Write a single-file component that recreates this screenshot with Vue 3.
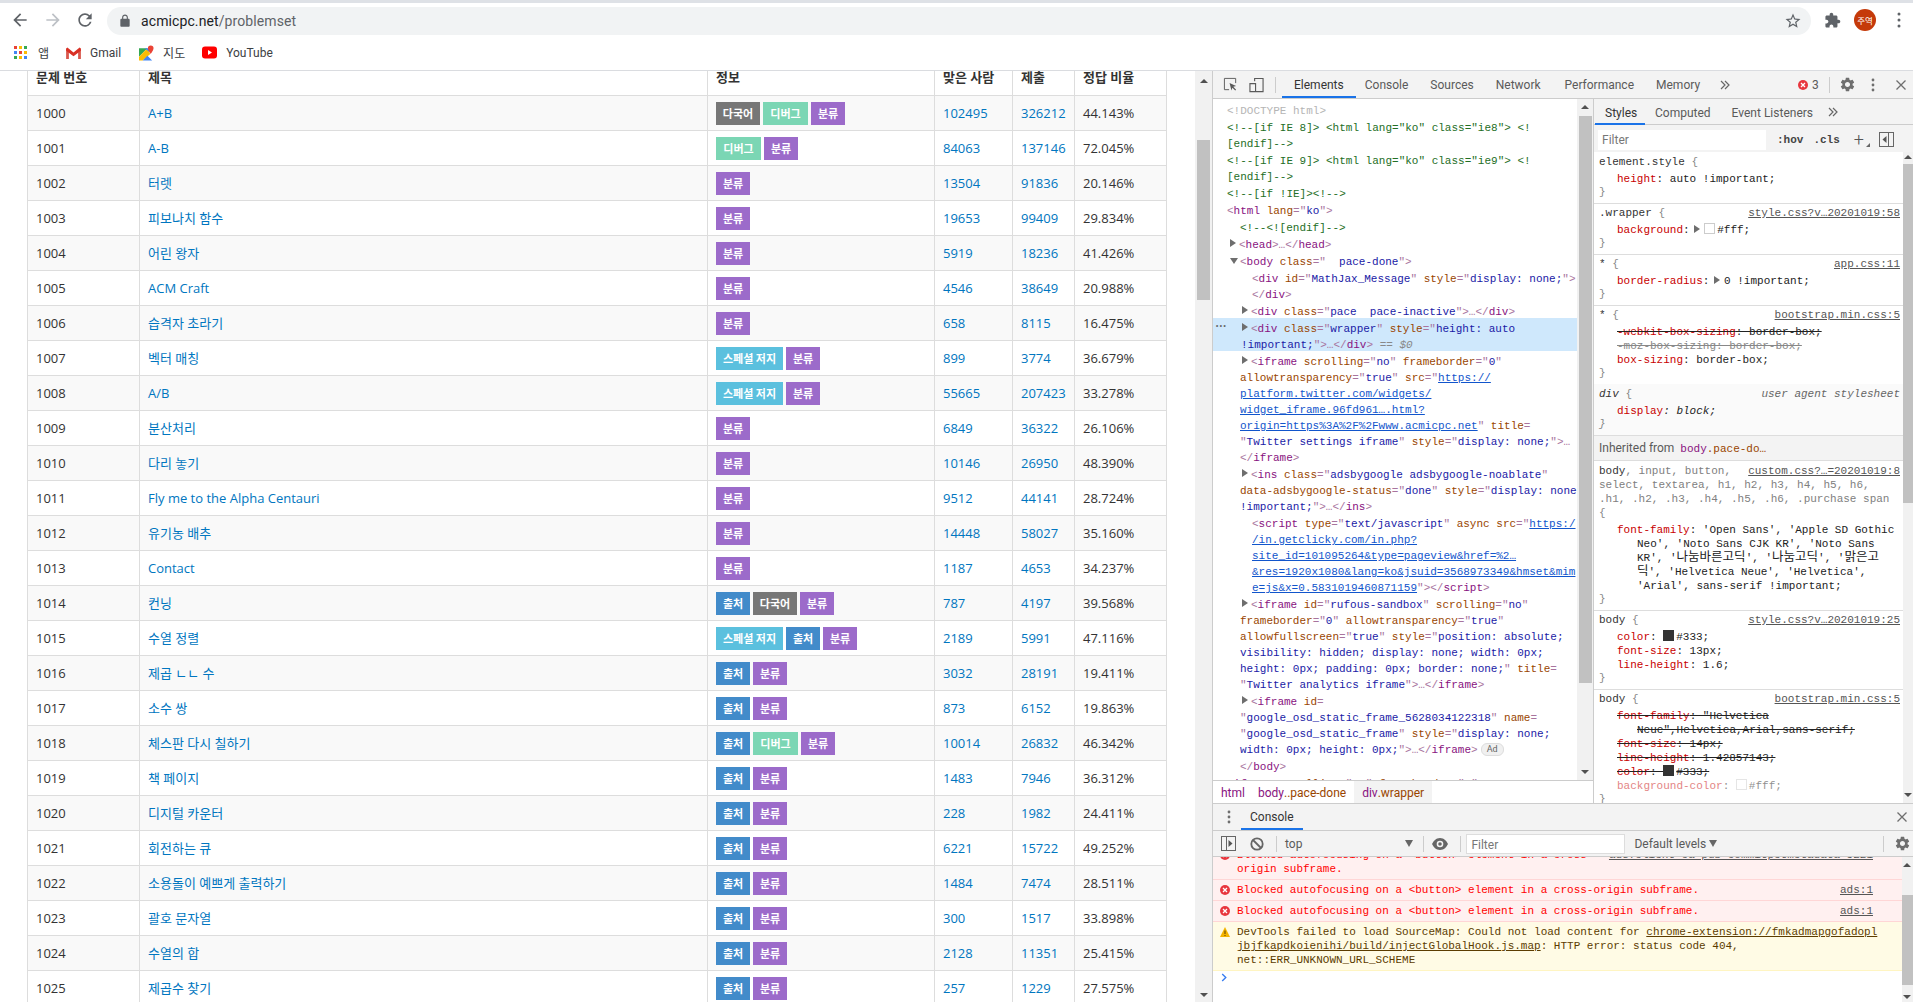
<script setup>
const raw = [
  'A+B|다국어,디버그,분류|102495|326212|44.143%', 'A-B|디버그,분류|84063|137146|72.045%', '터렛|분류|13504|91836|20.146%',
  '피보나치 함수|분류|19653|99409|29.834%', '어린 왕자|분류|5919|18236|41.426%', 'ACM Craft|분류|4546|38649|20.988%',
  '습격자 초라기|분류|658|8115|16.475%', '벡터 매칭|스페셜 저지,분류|899|3774|36.679%', 'A/B|스페셜 저지,분류|55665|207423|33.278%',
  '분산처리|분류|6849|36322|26.106%', '다리 놓기|분류|10146|26950|48.390%', 'Fly me to the Alpha Centauri|분류|9512|44141|28.724%',
  '유기농 배추|분류|14448|58027|35.160%', 'Contact|분류|1187|4653|34.237%', '컨닝|출처,다국어,분류|787|4197|39.568%',
  '수열 정렬|스페셜 저지,출처,분류|2189|5991|47.116%', '제곱 ㄴㄴ 수|출처,분류|3032|28191|19.411%', '소수 쌍|출처,분류|873|6152|19.863%',
  '체스판 다시 칠하기|출처,디버그,분류|10014|26832|46.342%', '책 페이지|출처,분류|1483|7946|36.312%', '디지털 카운터|출처,분류|228|1982|24.411%',
  '회전하는 큐|출처,분류|6221|15722|49.252%', '소용돌이 예쁘게 출력하기|출처,분류|1484|7474|28.511%', '괄호 문자열|출처,분류|300|1517|33.898%',
  '수열의 합|출처,분류|2128|11351|25.415%', '제곱수 찾기|출처,분류|257|1229|27.575%',
]
const kinds = { '다국어': 'k-multi', '디버그': 'k-debug', '분류': 'k-cat', '스페셜 저지': 'k-special', '출처': 'k-source' }
const rows = raw.map((r, i) => {
  const [title, labels, ac, sub, ratio] = r.split('|')
  return { id: 1000 + i, title, labels: labels.split(','), ac, sub, ratio }
})

const parse = (s) => [...s.matchAll(/\{(\w)\}([^{]*)/g)].map((m) => ({ c: 'h-' + m[1], t: m[2] }))
const src = [
  [14, 1, '', '{d}<!DOCTYPE html>'],
  [14, 1, '', '{c}<!--[if IE 8]> <html lang="ko" class="ie8"> <!'],
  [14, 0, '', '{c}[endif]-->'],
  [14, 1, '', '{c}<!--[if IE 9]> <html lang="ko" class="ie9"> <!'],
  [14, 0, '', '{c}[endif]-->'],
  [14, 1, '', '{c}<!--[if !IE]><!-->'],
  [14, 1, '', '{p}<{t}html {n}lang{p}="{v}ko{p}">'],
  [27, 1, '', '{c}<!--<![endif]-->'],
  [26, 1, 'r', '{p}<{t}head{p}>…</{t}head{p}>'],
  [26, 1, 'd', '{p}<{t}body {n}class{p}="  {v}pace-done{p}">'],
  [39, 1, '', '{p}<{t}div {n}id{p}="{v}MathJax_Message{p}" {n}style{p}="{v}display: none;{p}">'],
  [39, 0, '', '{p}</{t}div{p}>'],
  [38, 1, 'r', '{p}<{t}div {n}class{p}="{v}pace  pace-inactive{p}">…</{t}div{p}>'],
  [38, 1, 'r', '{p}<{t}div {n}class{p}="{v}wrapper{p}" {n}style{p}="{v}height: auto', 's'],
  [28, 0, '', '{v}!important;{p}">…</{t}div{p}>{e} == $0', 's'],
  [38, 1, 'r', '{p}<{t}iframe {n}scrolling{p}="{v}no{p}" {n}frameborder{p}="{v}0{p}"'],
  [27, 0, '', '{n}allowtransparency{p}="{v}true{p}" {n}src{p}="{l}https://'],
  [27, 0, '', '{l}platform.twitter.com/widgets/'],
  [27, 0, '', '{l}widget_iframe.96fd961….html?'],
  [27, 0, '', '{l}origin=https%3A%2F%2Fwww.acmicpc.net{p}" {n}title{p}='],
  [27, 0, '', '{p}"{v}Twitter settings iframe{p}" {n}style{p}="{v}display: none;{p}">…'],
  [27, 0, '', '{p}</{t}iframe{p}>'],
  [38, 1, 'r', '{p}<{t}ins {n}class{p}="{v}adsbygoogle adsbygoogle-noablate{p}"'],
  [27, 0, '', '{n}data-adsbygoogle-status{p}="{v}done{p}" {n}style{p}="{v}display: none'],
  [27, 0, '', '{v}!important;{p}">…</{t}ins{p}>'],
  [39, 1, '', '{p}<{t}script {n}type{p}="{v}text/javascript{p}" {n}async {n}src{p}="{l}https:/'],
  [39, 0, '', '{l}/in.getclicky.com/in.php?'],
  [39, 0, '', '{l}site_id=101095264&type=pageview&href=%2…'],
  [39, 0, '', '{l}&res=1920x1080&lang=ko&jsuid=3568973349&hmset&mim'],
  [39, 0, '', '{l}e=js&x=0.5831019460871159{p}"></{t}script{p}>'],
  [38, 1, 'r', '{p}<{t}iframe {n}id{p}="{v}rufous-sandbox{p}" {n}scrolling{p}="{v}no{p}"'],
  [27, 0, '', '{n}frameborder{p}="{v}0{p}" {n}allowtransparency{p}="{v}true{p}"'],
  [27, 0, '', '{n}allowfullscreen{p}="{v}true{p}" {n}style{p}="{v}position: absolute;'],
  [27, 0, '', '{v}visibility: hidden; display: none; width: 0px;'],
  [27, 0, '', '{v}height: 0px; padding: 0px; border: none;{p}" {n}title{p}='],
  [27, 0, '', '{p}"{v}Twitter analytics iframe{p}">…</{t}iframe{p}>'],
  [38, 1, 'r', '{p}<{t}iframe {n}id{p}='],
  [27, 0, '', '{p}"{v}google_osd_static_frame_5628034122318{p}" {n}name{p}='],
  [27, 0, '', '{p}"{v}google_osd_static_frame{p}" {n}style{p}="{v}display: none;'],
  [27, 0, '', '{v}width: 0px; height: 0px;{p}">…</{t}iframe{p}>', '', 'ad'],
  [27, 1, '', '{p}</{t}body{p}>'],
  [14, 1, '', '{p}<{t}iframe {n}scrolling{p}="{v}no{p}" {n}frameborder{p}="{v}0{p}"'],
]
const lines = src.map(([ind, el, tri, h, sel, ad]) => ({ ind, el, tri, segs: parse(h), sel, ad }))
const paths = {
  back: 'M20 11H7.83l5.59-5.59L12 4l-8 8 8 8 1.41-1.41L7.83 13H20v-2z',
  fwd: 'M4 11h12.17l-5.59-5.59L12 4l8 8-8 8-1.41-1.41L16.17 13H4v-2z',
  reload: 'M17.65 6.35A7.958 7.958 0 0 0 12 4c-4.42 0-7.99 3.58-7.99 8s3.57 8 7.99 8c3.73 0 6.84-2.55 7.73-6h-2.08A5.99 5.99 0 0 1 12 18c-3.31 0-6-2.69-6-6s2.69-6 6-6c1.66 0 3.14.69 4.22 1.78L13 11h7V4l-2.35 2.35z',
  lock: 'M18 8h-1V6c0-2.76-2.24-5-5-5S7 3.24 7 6v2H6c-1.1 0-2 .9-2 2v10c0 1.1.9 2 2 2h12c1.1 0 2-.9 2-2V10c0-1.1-.9-2-2-2zM9 6c0-1.66 1.34-3 3-3s3 1.34 3 3v2H9V6z',
  star: 'M22 9.24l-7.19-.62L12 2 9.19 8.63 2 9.24l5.46 4.73L5.82 21 12 17.27 18.18 21l-1.63-7.03L22 9.24zM12 15.4l-3.76 2.27 1-4.28-3.32-2.88 4.38-.38L12 6.1l1.71 4.04 4.38.38-3.32 2.88 1 4.28L12 15.4z',
  puzzle: 'M20.5 11H19V7c0-1.1-.9-2-2-2h-4V3.5C13 2.12 11.88 1 10.5 1S8 2.12 8 3.5V5H4c-1.1 0-1.99.9-1.99 2v3.8H3.5c1.49 0 2.7 1.21 2.7 2.7s-1.21 2.7-2.7 2.7H2V20c0 1.1.9 2 2 2h3.8v-1.5c0-1.49 1.21-2.7 2.7-2.7 1.49 0 2.7 1.21 2.7 2.7V22H17c1.1 0 2-.9 2-2v-4h1.5c1.38 0 2.5-1.12 2.5-2.5S21.88 11 20.5 11z',
  gear: 'M19.14 12.94c.04-.3.06-.61.06-.94 0-.32-.02-.64-.07-.94l2.03-1.58a.49.49 0 0 0 .12-.61l-1.92-3.32a.488.488 0 0 0-.59-.22l-2.39.96c-.5-.38-1.03-.7-1.62-.94l-.36-2.54a.484.484 0 0 0-.48-.41h-3.84c-.24 0-.43.17-.47.41l-.36 2.54c-.59.24-1.13.57-1.62.94l-2.39-.96c-.22-.08-.47 0-.59.22L2.74 8.87c-.12.21-.08.47.12.61l2.03 1.58c-.05.3-.09.63-.09.94s.02.64.07.94l-2.03 1.58a.49.49 0 0 0-.12.61l1.92 3.32c.12.22.37.29.59.22l2.39-.96c.5.38 1.03.7 1.62.94l.36 2.54c.05.24.24.41.48.41h3.84c.24 0 .44-.17.47-.41l.36-2.54c.59-.24 1.13-.56 1.62-.94l2.39.96c.22.08.47 0 .59-.22l1.92-3.32c.12-.22.07-.47-.12-.61l-2.01-1.58zM12 15.6c-1.98 0-3.6-1.62-3.6-3.6s1.62-3.6 3.6-3.6 3.6 1.62 3.6 3.6-1.62 3.6-3.6 3.6z',
}
const appColors = ['#ea4335', '#fbbc05', '#34a853', '#4285f4', '#ea4335', '#fbbc05', '#34a853', '#fbbc05', '#4285f4']
</script>

<template>
  <div class="screen">
    <div class="tabstrip"></div>
    <div class="toolbar">
      <svg class="nav" viewBox="0 0 24 24" width="20" height="20"><path :d="paths.back" fill="#5f6368" /></svg>
      <svg class="nav fwd" viewBox="0 0 24 24" width="20" height="20"><path :d="paths.fwd" fill="#bdc1c6" /></svg>
      <svg class="nav rel" viewBox="0 0 24 24" width="20" height="20"><path :d="paths.reload" fill="#5f6368" /></svg>
      <div class="omni">
        <svg viewBox="0 0 24 24" width="14" height="14"><path :d="paths.lock" fill="#5f6368" /></svg>
        <span class="url"><b>acmicpc.net</b>/problemset</span>
        <svg class="star" viewBox="0 0 24 24" width="18" height="18"><path :d="paths.star" fill="#5f6368" /></svg>
      </div>
      <svg class="puzzle" viewBox="0 0 24 24" width="17" height="17"><path :d="paths.puzzle" fill="#5f6368" /></svg>
      <div class="avatar">주역</div>
      <svg class="kebab" viewBox="0 0 4 16" width="4" height="16"><circle cx="2" cy="2" r="1.5" fill="#5f6368" /><circle cx="2" cy="8" r="1.5" fill="#5f6368" /><circle cx="2" cy="14" r="1.5" fill="#5f6368" /></svg>
    </div>
    <div class="bookmarks">
      <div class="bm">
        <div class="apps"><i v-for="(c, i) in appColors" :key="i" :style="{ background: c }"></i></div>
        <span>앱</span>
      </div>
      <div class="bm">
        <svg viewBox="0 0 16 13" width="15" height="12">
          <path d="M0 2v11h3V5l5 4 5-4v8h3V2L8 7z" fill="#eee" />
          <path d="M0 1.5V13h3V5z" fill="#d9574c" /><path d="M16 1.5V13h-3V5z" fill="#d9574c" />
          <path d="M0 1.5 1.4.6 8 6 14.6.6 16 1.5V4L8 10 0 4z" fill="#d93025" />
        </svg>
        <span>Gmail</span>
      </div>
      <div class="bm">
        <svg viewBox="0 0 16 16" width="15" height="16">
          <path d="M0 3h9l-9 9z" fill="#34a853" /><path d="M0 12 9 3l3 6-8 7H0z" fill="#fbbc05" />
          <path d="M4 16l5-5 5 5z" fill="#4285f4" /><path d="M6 3h5v4z" fill="#4285f4" />
          <path d="M12.500 0a3 3 0 0 0-3 3c0 2.200 3 6 3 6s3-3.800 3-6a3 3 0 0 0-3-3z" fill="#ea4335" />
        </svg>
        <span>지도</span>
      </div>
      <div class="bm">
        <svg viewBox="0 0 15 15" width="15" height="15"><rect y="1.500" width="15" height="12" rx="3" fill="#f00" /><path d="M6 5v5l4-2.500z" fill="#fff" /></svg>
        <span>YouTube</span>
      </div>
    </div>

    <div class="main">
      <div class="page">
        <div class="page-view">
          <table class="tbl">
            <colgroup><col class="c1" /><col class="c2" /><col class="c3" /><col class="c4" /><col class="c5" /><col class="c6" /></colgroup>
            <thead>
              <tr><th>문제 번호</th><th>제목</th><th>정보</th><th>맞은 사람</th><th>제출</th><th>정답 비율</th></tr>
            </thead>
            <tbody>
              <tr v-for="r in rows" :key="r.id">
                <td>{{ r.id }}</td>
                <td><a>{{ r.title }}</a></td>
                <td>
                  <div class="labels"><span v-for="l in r.labels" :key="l" class="label" :class="kinds[l]">{{ l }}</span></div>
                </td>
                <td><a>{{ r.ac }}</a></td>
                <td><a>{{ r.sub }}</a></td>
                <td>{{ r.ratio }}</td>
              </tr>
            </tbody>
          </table>
        </div>
        <div class="sb page-sb">
          <i class="up"></i><b class="thumb"></b><i class="down"></i>
        </div>
      </div>

      <div class="devtools">
        <div class="dt-bar">
          <svg class="dt-inspect" viewBox="0 0 16 16" width="15" height="15"><path d="M1.500 13.500v-12h12v5M1.500 13.500h5" fill="none" stroke="#5a5a5a" /><path d="M7 6.500l7 3-3 1 3 3-1 1-3-3-1 3z" fill="#5a5a5a" /></svg>
          <svg class="dt-device" viewBox="0 0 16 16" width="15" height="16"><path d="M6 4V1h9v14h-8M1 6.500h6V15H1z" fill="none" stroke="#5a5a5a" stroke-width="1.200" /></svg>
          <i class="vsep dt-sep"></i>
          <span class="tab on first">Elements</span><span class="tab t-con">Console</span><span class="tab">Sources</span><span class="tab">Network</span><span class="tab t-perf">Performance</span><span class="tab">Memory</span>
          <svg class="more" viewBox="0 0 10 10" width="10" height="10"><path d="M1 1l4 4-4 4M5 1l4 4-4 4" fill="none" stroke="#666" stroke-width="1.200" /></svg>
          <span class="errs">
            <svg viewBox="0 0 10 10" width="10" height="10"><circle cx="5" cy="5" r="5" fill="#e8363e" /><path d="M3 3l4 4M7 3l-4 4" stroke="#fff" stroke-width="1.300" /></svg>
            3
          </span>
          <i class="vsep"></i>
          <svg class="gear" viewBox="0 0 24 24" width="17" height="17"><path :d="paths.gear" fill="#6e6e6e" /></svg>
          <svg class="dt-dots" viewBox="0 0 4 14" width="4" height="14"><circle cx="2" cy="2" r="1.400" fill="#6e6e6e" /><circle cx="2" cy="7" r="1.400" fill="#6e6e6e" /><circle cx="2" cy="12" r="1.400" fill="#6e6e6e" /></svg>
          <svg class="dt-x" viewBox="0 0 10 10" width="10" height="10"><path d="M.5.5l9 9M9.500.5l-9 9" stroke="#6e6e6e" stroke-width="1.300" /></svg>
        </div>

        <div class="upper">
          <div class="el-col">
            <div class="el-wrap">
              <div class="dom">
                <div v-for="(l, i) in lines" :key="i" class="ln" :class="{ first: l.el, sel: l.sel }" :style="{ paddingLeft: l.ind + 'px' }">
                  <span v-if="i === 13" class="dots">•••</span>
                  <i v-if="l.tri" class="tri" :class="l.tri"></i>
                  <span v-for="(s, j) in l.segs" :key="j" :class="s.c">{{ s.t }}</span>
                  <span v-if="l.ad" class="ad">Ad</span>
                </div>
              </div>
              <div class="sb el-sb"><i class="up"></i><b class="thumb"></b><i class="down"></i></div>
            </div>
            <div class="crumbs">
              <span class="cr h-t">html</span>
              <span class="cr"><span class="h-t">body</span><span class="h-n">..pace-done</span></span>
              <span class="cr cur"><span class="h-t">div</span><span class="h-n">.wrapper</span></span>
            </div>
          </div>

          <div class="side">
            <div class="side-tabs">
              <span class="stab on">Styles</span><span class="stab">Computed</span><span class="stab">Event Listeners</span>
              <svg class="more" viewBox="0 0 10 10" width="10" height="10"><path d="M1 1l4 4-4 4M5 1l4 4-4 4" fill="none" stroke="#666" stroke-width="1.200" /></svg>
            </div>
            <div class="filter-row">
              <div class="fbox">Filter</div>
              <span class="fbtn hov">:hov</span>
              <span class="fbtn cls">.cls</span>
              <span class="plus">+</span>
              <i class="corner"></i>
              <svg class="toggle" viewBox="0 0 15 15" width="15" height="15"><rect x=".5" y=".5" width="14" height="14" fill="none" stroke="#666" /><path d="M9.500 1v13" stroke="#666" /><path d="M7.500 4v7L3.500 7.500z" fill="#555" /></svg>
            </div>
            <div class="side-body">
              <div class="rules">
                <section class="sec">
                  <div class="s">element.style <u>{</u></div>
                  <div class="p"><em>height</em>: auto !important;</div>
                  <div class="s"><u>}</u></div>
                </section>
                <section class="sec">
                  <div class="s row"><span>.wrapper <u>{</u></span><a>style.css?v…20201019:58</a></div>
                  <div class="p"><em>background</em>: <i class="tri r inl"></i><i class="sw"></i>#fff;</div>
                  <div class="s"><u>}</u></div>
                </section>
                <section class="sec">
                  <div class="s row"><span>* <u>{</u></span><a>app.css:11</a></div>
                  <div class="p"><em>border-radius</em>: <i class="tri r inl"></i>0 !important;</div>
                  <div class="s"><u>}</u></div>
                </section>
                <section class="sec">
                  <div class="s row"><span>* <u>{</u></span><a>bootstrap.min.css:5</a></div>
                  <div class="p over"><em>-webkit-box-sizing</em>: border-box;</div>
                  <div class="p over dim"><em class="nocol">-moz-box-sizing</em>: border-box;</div>
                  <div class="p tight"><em>box-sizing</em>: border-box;</div>
                  <div class="s"><u>}</u></div>
                </section>
                <section class="sec ua">
                  <div class="s row"><span><span class="it">div</span> <u>{</u></span><span class="it ua-src">user agent stylesheet</span></div>
                  <div class="p it"><em>display</em>: block;</div>
                  <div class="s it"><u>}</u></div>
                </section>
                <div class="inh">Inherited from <span class="inh-m"><span class="h-t">body</span><span class="h-n">.pace-do…</span></span></div>
                <section class="sec">
                  <div class="s row"><span>body<span class="gr">, input, button,</span></span><a>custom.css?…=20201019:8</a></div>
                  <div class="s gr">select, textarea, h1, h2, h3, h4, h5, h6,</div>
                  <div class="s gr">.h1, .h2, .h3, .h4, .h5, .h6, .purchase span</div>
                  <div class="s"><u>{</u></div>
                  <div class="p"><em>font-family</em>: <span class="v">'Open Sans', 'Apple SD Gothic</span></div>
                  <div class="p wrap">Neo', 'Noto Sans CJK KR', 'Noto Sans</div>
                  <div class="p wrap">KR', '<span class="cjk">나눔바른고딕</span>', '<span class="cjk">나눔고딕</span>', '<span class="cjk">맑은고</span></div>
                  <div class="p wrap"><span class="cjk">딕</span>', 'Helvetica Neue', 'Helvetica',</div>
                  <div class="p wrap">'Arial', sans-serif !important;</div>
                  <div class="s"><u>}</u></div>
                </section>
                <section class="sec">
                  <div class="s row"><span>body <u>{</u></span><a>style.css?v…20201019:25</a></div>
                  <div class="p"><em>color</em>: <i class="sw dark"></i>#333;</div>
                  <div class="p tight"><em>font-size</em>: 13px;</div>
                  <div class="p tight"><em>line-height</em>: 1.6;</div>
                  <div class="s"><u>}</u></div>
                </section>
                <section class="sec">
                  <div class="s row"><span>body <u>{</u></span><a>bootstrap.min.css:5</a></div>
                  <div class="p over"><em>font-family</em>: "Helvetica</div>
                  <div class="p wrap over">Neue",Helvetica,Arial,sans-serif;</div>
                  <div class="p tight over"><em>font-size</em>: 14px;</div>
                  <div class="p tight over"><em>line-height</em>: 1.42857143;</div>
                  <div class="p tight over"><em>color</em>: <i class="sw dark"></i>#333;</div>
                  <div class="p tight faded"><em>background-color</em>: <i class="sw"></i>#fff;</div>
                  <div class="s"><u>}</u></div>
                </section>
              </div>
              <div class="sb side-sb"><i class="up"></i><b class="thumb"></b><i class="down"></i></div>
            </div>
          </div>
        </div>

        <div class="drawer">
          <div class="dr-tabs">
            <svg class="dr-dots" viewBox="0 0 4 14" width="4" height="14"><circle cx="2" cy="2" r="1.400" fill="#6e6e6e" /><circle cx="2" cy="7" r="1.400" fill="#6e6e6e" /><circle cx="2" cy="12" r="1.400" fill="#6e6e6e" /></svg>
            <span class="tab on dr-tab">Console</span>
            <svg class="dr-x" viewBox="0 0 10 10" width="10" height="10"><path d="M.5.5l9 9M9.500.5l-9 9" stroke="#6e6e6e" stroke-width="1.300" /></svg>
          </div>
          <div class="dr-tools">
            <svg class="t-side" viewBox="0 0 15 15" width="15" height="15"><rect x=".5" y=".5" width="14" height="14" fill="none" stroke="#666" /><path d="M5.500 1v13" stroke="#666" /><path d="M7.500 4v7l4-3.500z" fill="#555" /></svg>
            <svg class="t-block" viewBox="0 0 14 14" width="14" height="14"><circle cx="7" cy="7" r="5.700" fill="none" stroke="#666" stroke-width="1.800" /><path d="M3 3l8 8" stroke="#666" stroke-width="1.800" /></svg>
            <i class="vsep t-sep1"></i>
            <span class="ctx">top</span>
            <i class="ctx-arrow"></i>
            <i class="vsep t-sep2"></i>
            <svg class="t-eye" viewBox="0 0 16 12" width="16" height="12"><path d="M8 0C4 0 1.500 3 0 6c1.500 3 4 6 8 6s6.500-3 8-6c-1.500-3-4-6-8-6z" fill="#666" /><circle cx="8" cy="6" r="3.300" fill="#f3f3f3" /><circle cx="8" cy="6" r="1.800" fill="#666" /></svg>
            <i class="vsep t-sep3"></i>
            <div class="fbox con">Filter</div>
            <span class="lv">Default levels</span>
            <i class="ctx-arrow lv-arrow"></i>
            <i class="vsep t-sep4"></i>
            <svg class="t-gear" viewBox="0 0 24 24" width="17" height="17"><path :d="paths.gear" fill="#6e6e6e" /></svg>
          </div>
          <div class="dr-body">
            <div class="msgs">
              <div class="m err top-m">
                <svg viewBox="0 0 10 10" width="10" height="10"><circle cx="5" cy="5" r="5" fill="#e8363e" /><path d="M3 3l4 4M7 3l-4 4" stroke="#fff" stroke-width="1.300" /></svg>
                <div class="mt">Blocked autofocusing on a &lt;button&gt; element in a cross-<br />origin subframe.</div>
                <a class="mlink">ads?client=ca-pub-commitpetmetadata-5221</a>
              </div>
              <div class="m err">
                <svg viewBox="0 0 10 10" width="10" height="10"><circle cx="5" cy="5" r="5" fill="#e8363e" /><path d="M3 3l4 4M7 3l-4 4" stroke="#fff" stroke-width="1.300" /></svg>
                <div class="mt">Blocked autofocusing on a &lt;button&gt; element in a cross-origin subframe.</div>
                <a class="mlink">ads:1</a>
              </div>
              <div class="m err">
                <svg viewBox="0 0 10 10" width="10" height="10"><circle cx="5" cy="5" r="5" fill="#e8363e" /><path d="M3 3l4 4M7 3l-4 4" stroke="#fff" stroke-width="1.300" /></svg>
                <div class="mt">Blocked autofocusing on a &lt;button&gt; element in a cross-origin subframe.</div>
                <a class="mlink">ads:1</a>
              </div>
              <div class="m warn">
                <svg viewBox="0 0 10 10" width="10" height="10"><path d="M5 0l5 10H0z" fill="#f4b400" /><path d="M5 3.500v3.500M5 8v1" stroke="#5c3c00" /></svg>
                <div class="mt">DevTools failed to load SourceMap: Could not load content for <a>chrome-extension://fmkadmapgofadopl</a><br /><a>jbjfkapdkoienihi/build/injectGlobalHook.js.map</a>: HTTP error: status code 404,<br />net::ERR_UNKNOWN_URL_SCHEME</div>
              </div>
              <div class="prompt"><svg viewBox="0 0 6 10" width="6" height="9"><path d="M1 1l4 4-4 4" fill="none" stroke="#367cf1" stroke-width="1.500" /></svg></div>
            </div>
            <div class="sb con-sb"><i class="up"></i><b class="thumb"></b><i class="down"></i></div>
          </div>
        </div>
      </div>
    </div>
  </div>
</template>

<style>
html, body { margin: 0; padding: 0; background: #fff; overflow: hidden; }
</style>

<style scoped>
.screen { width: 1913px; height: 1002px; display: flex; flex-direction: column; overflow: hidden; font-family: Roboto, "Noto Sans CJK KR", sans-serif; background: #fff; }
.tabstrip { height: 3px; background: #dee1e6; flex: none; }
.toolbar { height: 32px; flex: none; display: flex; align-items: center; padding-left: 10px; }
.nav { flex: none; margin-top: 2px; }
.fwd { margin-left: 13px; }
.rel { margin-left: 12px; }
.omni { margin-left: 12px; width: 1704px; height: 28px; margin-top: 4px; border-radius: 14px; background: #f1f3f4; display: flex; align-items: center; padding: 0 9px 0 11px; box-sizing: border-box; }
.url { margin-left: 9px; font-size: 14px; color: #5f6368; letter-spacing: .1px; }
.url b { font-weight: 400; color: #202124; }
.star { margin-left: auto; }
.puzzle { margin-left: 13px; margin-top: 2px; }
.avatar { margin-left: 13px; margin-top: 2px; width: 22px; height: 22px; border-radius: 50%; background: #c53a0a; color: #fff; font-size: 8.500px; display: flex; align-items: center; justify-content: center; flex: none; }
.kebab { margin-left: 21px; margin-top: 2px; flex: none; }
.bookmarks { height: 36px; flex: none; display: flex; align-items: center; padding-left: 14px; font-size: 12px; color: #3c4043; border-bottom: 1px solid #dadce0; box-sizing: border-box; }
.bm { display: flex; align-items: center; gap: 9px; }
.bm:nth-child(1) { margin-right: 17px; gap: 11px; }
.bm:nth-child(2) { margin-right: 18px; }
.bm:nth-child(3) { margin-right: 17px; }
.apps { display: grid; grid-template-columns: repeat(3, 3px); gap: 2px; }
.apps i { width: 3px; height: 3px; display: block; }

.main { flex: 1; min-height: 0; display: flex; }
.page { width: 1212px; flex: none; display: flex; overflow: hidden; }
.page-view { flex: 1; overflow: hidden; font-family: "Open Sans", "Noto Sans CJK KR", sans-serif; font-size: 13px; color: #333; }
.tbl { border-collapse: collapse; table-layout: fixed; width: 1139px; margin: 0 0 0 27px; }
.c1 { width: 112px; } .c2 { width: 568px; } .c3 { width: 227px; } .c4 { width: 78px; } .c5 { width: 62px; } .c6 { width: 92px; }
th, td { border: 1px solid #ddd; height: 35px; padding: 0 8px; text-align: left; box-sizing: border-box; line-height: 20px; white-space: nowrap; }
th { font-weight: 700; border-top: none; height: 24px; line-height: 12px; vertical-align: top; }
tbody tr:nth-child(odd) { background: #f9f9f9; }
td a { color: #0076c0; }
.labels { display: flex; gap: 3px; margin-top: 1px; }
.label { height: 23px; display: flex; align-items: center; justify-content: center; color: #fff; font-weight: 700; font-size: 11px; font-family: "Noto Sans CJK KR", sans-serif; }
.k-multi { width: 44px; background: #777; }
.k-debug { width: 45px; background: #7bd6b4; }
.k-cat { width: 34px; background: #9c6bca; }
.k-special { width: 67px; background: #5bc0de; }
.k-source { width: 34px; background: #428bca; }

.sb { display: flex; flex-direction: column; flex: none; background: #f1f1f1; }
.sb .thumb { display: block; background: #c1c1c1; flex: none; }
.sb .up, .sb .down { display: block; width: 0; height: 0; border-left: 4px solid transparent; border-right: 4px solid transparent; flex: none; }
.sb .up { border-bottom: 4px solid #505050; }
.sb .down { border-top: 4px solid #505050; margin-top: auto; }
.page-sb { width: 17px; align-items: center; padding: 8px 0 5px; box-sizing: border-box; }
.page-sb .thumb { width: 13px; height: 160px; margin-top: 57px; }

.devtools { flex: 1; min-width: 0; display: flex; flex-direction: column; border-left: 1px solid #ccc; box-sizing: border-box; background: #f3f3f3; color: #5a5a5a; }
.dt-bar { height: 28px; flex: none; display: flex; align-items: center; border-bottom: 1px solid #ccc; box-sizing: border-box; font-size: 12px; }
.dt-inspect { margin-left: 10px; flex: none; }
.dt-device { margin-left: 11px; flex: none; }
.vsep { width: 1px; height: 16px; background: #ccc; display: block; flex: none; }
.dt-sep { margin-left: 11px; }
.tab { padding: 0 11px; height: 27px; line-height: 29px; box-sizing: border-box; flex: none; white-space: nowrap; }
.tab.first { margin-left: 6px; padding: 0 12px; }
.t-con { margin-left: -2px; }
.t-perf { margin-left: 2px; }
.tab.on { color: #333; border-bottom: 2px solid #1a73e8; }
.more { margin-left: 9px; flex: none; }
.errs { margin-left: 68px; display: flex; align-items: center; gap: 4px; font-size: 12px; }
.errs + .vsep { margin-left: 10px; }
.gear { margin-left: 9px; flex: none; }
.dt-dots { margin-left: 15px; flex: none; }
.dt-x { margin-left: 21px; flex: none; }

.upper { height: 704px; flex: none; display: flex; min-height: 0; }
.el-col { width: 380px; flex: none; display: flex; flex-direction: column; }
.el-wrap { flex: 1; display: flex; min-height: 0; }
.dom { flex: 1; min-width: 0; background: #fff; padding-top: 1px; overflow: hidden; font: 11px/16px "Liberation Mono", "Noto Sans CJK KR", monospace; }
.ln { height: 14px; padding-top: 2px; white-space: pre; box-sizing: content-box; position: relative; }
.ln.first { padding-top: 3px; }
.ln.sel { background: #cfe8fc; }
.dots { position: absolute; left: 2px; top: 0; font-size: 7px; color: #666; letter-spacing: -.5px; }
.tri { display: inline-block; width: 0; height: 0; margin-right: 2px; margin-left: -9px; vertical-align: 1px; }
.tri.r { border-top: 4px solid transparent; border-bottom: 4px solid transparent; border-left: 6px solid #6e6e6e; margin-right: 3px; }
.tri.d { border-left: 4px solid transparent; border-right: 4px solid transparent; border-top: 6px solid #6e6e6e; margin-right: 2px; margin-left: -9px; }
.tri.inl { margin: 0 4px 0 -2px; vertical-align: 0; border-top-width: 4px; }
.h-d { color: #b5b5b5; }
.h-c { color: #236e25; }
.h-p { color: #a8749e; }
.h-t { color: #881280; }
.h-n { color: #994500; }
.h-v { color: #1a1aa6; }
.h-l { color: #1155cc; text-decoration: underline; }
.h-e { color: #888; font-style: italic; }
.ad { display: inline-block; margin-left: 3px; padding: 0 5px; height: 11px; line-height: 11px; border-radius: 6px; background: #f0f0f0; border: 1px solid #ddd; font: 9px/11px Roboto, sans-serif; color: #666; vertical-align: 1px; }
.el-sb { width: 16px; align-items: center; padding: 6px 0 6px; box-sizing: border-box; background: #f1f1f1; }
.el-sb .thumb { width: 13px; height: 567px; margin-top: 7px; }
.crumbs { height: 23px; flex: none; background: #fff; border-top: 1px solid #ccc; display: flex; align-items: center; box-sizing: border-box; font-size: 12px; padding-left: 0; }
.cr { padding: 1px 8px 0; height: 100%; display: flex; align-items: center; box-sizing: border-box; }
.cr:first-child { padding-right: 3px; }
.cr + .cr { margin-left: 2px; }
.cr.cur { background: #f3f3f3; margin-left: 0; }

.side { flex: 1; min-width: 0; display: flex; flex-direction: column; border-left: 1px solid #ccc; box-sizing: border-box; }
.side-tabs { height: 26px; flex: none; display: flex; align-items: center; font-size: 12px; border-bottom: 1px solid #ccc; box-sizing: border-box; padding-left: 1px; }
.stab { height: 26px; line-height: 29px; padding: 0 10px; box-sizing: border-box; flex: none; margin-right: 8px; }
.stab.on { color: #333; border-bottom: 2px solid #1a73e8; width: 50px; margin-right: 0; }
.stab:nth-child(3) { padding-left: 3px; }
.side-tabs .more { margin-left: -3px; }
.filter-row { height: 27px; flex: none; display: flex; align-items: center; padding: 2px 0 0 4px; box-sizing: border-box; background: #f3f3f3; }
.fbox { width: 168px; height: 20px; background: #fff; font-size: 12px; line-height: 20px; padding-left: 4px; box-sizing: border-box; color: #777; flex: none; }
.fbtn { font: 700 11px "Liberation Mono", monospace; color: #444; }
.hov { margin-left: 11px; }
.cls { margin-left: 10px; }
.plus { margin-left: 14px; font-size: 18px; font-weight: 300; line-height: 20px; color: #555; }
.corner { width: 0; height: 0; border-left: 4px solid transparent; border-bottom: 4px solid #666; align-self: flex-end; margin: 0 0 5px 2px; display: block; }
.toggle { margin-left: 9px; flex: none; }
.side-body { flex: 1; min-height: 0; display: flex; }
.rules { flex: 1; min-width: 0; overflow: hidden; background: #fff; font: 11px/14px "Liberation Mono", "Noto Sans CJK KR", monospace; color: #222; }
.sec { padding: 3px 3px 4px 5px; border-bottom: 1px solid #ddd; height: auto; box-sizing: content-box; margin-bottom: -1px; padding-bottom: 4px; white-space: pre; }
.sec .s { height: 14px; color: #333; }
.sec .s u { text-decoration: none; color: #888; }
.row { display: flex; justify-content: space-between; }
.row a { color: #555; text-decoration: underline; }
.gr { color: #808080 !important; }
.p { height: 14px; padding-left: 18px; color: #222; }
.s + .p { margin-top: 3px; }
.p + .s { margin-top: -1px; }
.p.wrap { padding-left: 38px; }
.p em { font-style: normal; color: #c80000; }
.p.over { text-decoration: line-through; }
.p.dim { color: #888; }
.p.dim .nocol { color: #888; }
.p.faded { opacity: .5; }
.cjk { font-size: 12.5px; line-height: 14px; }
.sw { display: inline-block; width: 9px; height: 9px; border: 1px solid #ccc; background: #fff; margin-right: 2px; vertical-align: -1px; }
.sw.dark { background: #333; border-color: #333; }
.it { font-style: italic; }
.ua { background: #fafafa; }
.ua-src { color: #666; }
.inh { height: 25px; margin-top: 1px; background: #f3f3f3; border-bottom: 1px solid #ddd; box-sizing: border-box; font: 12px/24px Roboto, sans-serif; padding-left: 5px; color: #5a5a5a; }
.inh-m { font: 11px "Liberation Mono", monospace; margin-left: 3px; }
.side-sb { width: 10px; padding: 3px 0 6px; box-sizing: border-box; align-items: flex-start; }
.side-sb .thumb { width: 10px; height: 339px; margin-top: 5px; }
.side-sb .up, .side-sb .down { margin-left: 1px; }

.drawer { flex: 1; min-height: 0; display: flex; flex-direction: column; border-top: 1px solid #ccc; }
.dr-tabs { height: 26px; flex: none; display: flex; align-items: center; border-bottom: 1px solid #ccc; box-sizing: content-box; font-size: 12px; }
.dr-dots { margin-left: 14px; flex: none; }
.dr-tab { margin-left: 10px; width: 62px; padding: 0 9px; height: 26px; line-height: 26px; }
.dr-x { margin-left: auto; margin-right: 6px; flex: none; }
.dr-tools { height: 26px; flex: none; display: flex; align-items: center; border-bottom: 1px solid #ccc; box-sizing: border-box; font-size: 12px; }
.t-side { margin-left: 8px; flex: none; }
.t-block { margin-left: 14px; flex: none; }
.t-sep1 { margin-left: 12px; }
.ctx { margin-left: 8px; }
.ctx-arrow { display: block; width: 0; height: 0; border-left: 4px solid transparent; border-right: 4px solid transparent; border-top: 7px solid #666; margin-left: 103px; flex: none; }
.t-sep2 { margin-left: 10px; }
.t-eye { margin-left: 8px; flex: none; }
.t-sep3 { margin-left: 12px; }
.fbox.con { width: 159px; margin-left: 5px; border: 1px solid #ddd; margin-top: 1px; }
.lv { margin-left: 9px; }
.ctx-arrow.lv-arrow { margin-left: 3px; }
.t-sep4 { margin-left: auto; }
.t-gear { margin-left: 10px; margin-right: 2px; flex: none; }
.dr-body { flex: 1; min-height: 0; display: flex; }
.msgs { flex: 1; min-width: 0; overflow: hidden; background: #fff; font: 11px/14px "Liberation Mono", monospace; }
.m { display: flex; padding: 3px 29px 3px 7px; box-sizing: border-box; border-bottom: 1px solid transparent; white-space: pre; }
.m svg { flex: none; margin-top: 2px; }
.mt { margin-left: 7px; flex: 1; min-width: 0; }
.mlink { text-decoration: underline; color: #555; flex: none; }
.m a { text-decoration: underline; }
.err { background: #fff0f0; color: #f00; border-color: #ffd6d6; }
.top-m { margin-top: -12px; }
.err .mlink { color: #555; }
.warn { background: #fffbe5; color: #5c3c00; border-color: #fff5c2; }
.prompt { height: 20px; padding: 1px 0 0 8px; box-sizing: border-box; }
.con-sb { width: 11px; padding: 6px 0 3px; box-sizing: border-box; align-items: flex-start; }
.con-sb .thumb { width: 11px; height: 90px; margin-top: 28px; }
.con-sb .up, .con-sb .down { margin-left: 1px; }
</style>
